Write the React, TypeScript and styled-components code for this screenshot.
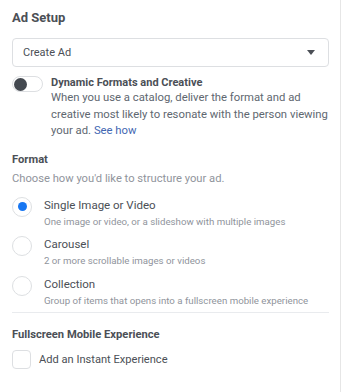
import React from 'react';
import styled, { createGlobalStyle } from 'styled-components';

const GlobalStyle = createGlobalStyle`
  html, body {
    margin: 0;
    padding: 0;
    background: #ffffff;
  }
  body {
    font-family: Roboto, "Liberation Sans", Arial, sans-serif;
    color: #4b4f56;
  }
`;

const formats = [
  {
    title: 'Single Image or Video',
    hint: 'One image or video, or a slideshow with multiple images',
    checked: true,
  },
  { title: 'Carousel', hint: '2 or more scrollable images or videos', checked: false },
  {
    title: 'Collection',
    hint: 'Group of items that opens into a fullscreen mobile experience',
    checked: false,
  },
];

const App = () => {
  return (
    <>
      <GlobalStyle />
      <Panel>
        <Heading>Ad Setup</Heading>
        <Select>
          <span>Create Ad</span>
          <Caret />
        </Select>

        <ToggleRow>
          <Toggle>
            <Knob />
          </Toggle>
          <ToggleText>
            <ToggleTitle>Dynamic Formats and Creative</ToggleTitle>
            <Description>
              When you use a catalog, deliver the format and ad creative most likely to
              resonate with the person viewing your ad. <Link>See how</Link>
            </Description>
          </ToggleText>
        </ToggleRow>

        <SubHeading>Format</SubHeading>
        <Prompt>Choose how you'd like to structure your ad.</Prompt>
        <Options>
          {formats.map((f) => (
            <Option key={f.title}>
              <Radio $checked={f.checked} />
              <div>
                <OptionTitle>{f.title}</OptionTitle>
                <OptionHint>{f.hint}</OptionHint>
              </div>
            </Option>
          ))}
        </Options>

        <Divider />

        <SubHeading $gap={14}>Fullscreen Mobile Experience</SubHeading>
        <CheckRow>
          <Checkbox />
          <span>Add an Instant Experience</span>
        </CheckRow>
      </Panel>
    </>
  );
};

export default App;

const Panel = styled.div`
  box-sizing: border-box;
  width: 341px;
  height: 392px;
  border-right: 1px solid #e6e6e6;
  padding: 9px 12px 0 12px;
  display: flex;
  flex-direction: column;
`;

const Heading = styled.h2`
  margin: 0;
  font-size: 13px;
  font-weight: 700;
  line-height: 18px;
  color: #4b4f56;
`;

const Select = styled.div`
  box-sizing: border-box;
  margin-top: 11px;
  width: 317px;
  height: 29px;
  border: 1px solid #dddfe2;
  border-radius: 4px;
  display: flex;
  align-items: center;
  justify-content: space-between;
  padding: 0 13px 0 10px;
  font-size: 11px;
  color: #4b4f56;
`;

const Caret = styled.span`
  width: 0;
  height: 0;
  border-left: 4px solid transparent;
  border-right: 4px solid transparent;
  border-top: 5px solid #4b4f56;
`;

const ToggleRow = styled.div`
  display: flex;
  gap: 8px;
  margin-top: 8px;
`;

const Toggle = styled.div`
  box-sizing: border-box;
  flex: none;
  width: 31px;
  height: 16px;
  margin-top: 1px;
  border: 1px solid #dddfe2;
  border-radius: 8px;
  background: #fff;
  display: flex;
  align-items: center;
  padding-left: 1px;
`;

const Knob = styled.span`
  width: 13px;
  height: 13px;
  border-radius: 50%;
  background: #444950;
`;

const ToggleText = styled.div`
  flex: 1;
  min-width: 0;
`;

const ToggleTitle = styled.div`
  font-size: 11px;
  font-weight: 700;
  line-height: 16px;
  color: #4b4f56;
`;

const Description = styled.p`
  margin: -1px 0 0;
  font-size: 11.3px;
  line-height: 16.5px;
  color: #606770;
`;

const Link = styled.a`
  color: #4267b2;
  cursor: pointer;
`;

const SubHeading = styled.div<{ $gap?: number }>`
  margin-top: ${(p) => p.$gap ?? 12}px;
  font-size: 11.2px;
  font-weight: 700;
  line-height: 16px;
  color: #4b4f56;
`;

const Prompt = styled.div`
  margin-top: 3px;
  font-size: 11.2px;
  line-height: 16px;
  color: #90949c;
`;

const Options = styled.div`
  display: flex;
  flex-direction: column;
  gap: 7.5px;
  margin-top: 10px;
`;

const Option = styled.label`
  display: flex;
  align-items: flex-start;
  gap: 12px;
`;

const Radio = styled.span<{ $checked: boolean }>`
  box-sizing: border-box;
  flex: none;
  width: 20px;
  height: 20px;
  border-radius: 50%;
  border: 1px solid #dddfe2;
  background: #fff;
  display: flex;
  align-items: center;
  justify-content: center;
  &::after {
    content: '';
    width: 9px;
    height: 9px;
    border-radius: 50%;
    background: ${(p) => (p.$checked ? '#1877f2' : 'transparent')};
  }
`;

const OptionTitle = styled.div`
  font-size: 11.5px;
  line-height: 16px;
  color: #4b4f56;
`;

const OptionHint = styled.div`
  margin-top: 2px;
  font-size: 9.7px;
  line-height: 14px;
  color: #90949c;
`;

const Divider = styled.hr`
  margin: 4px 0 0;
  border: 0;
  border-top: 1px solid #e9ebee;
  width: 317px;
`;

const CheckRow = styled.div`
  display: flex;
  align-items: center;
  gap: 8px;
  margin-top: 7px;
  font-size: 11.1px;
  color: #4b4f56;
`;

const Checkbox = styled.span`
  box-sizing: border-box;
  width: 19px;
  height: 19px;
  border: 1px solid #dddfe2;
  border-radius: 4px;
  background: #fff;
`;
